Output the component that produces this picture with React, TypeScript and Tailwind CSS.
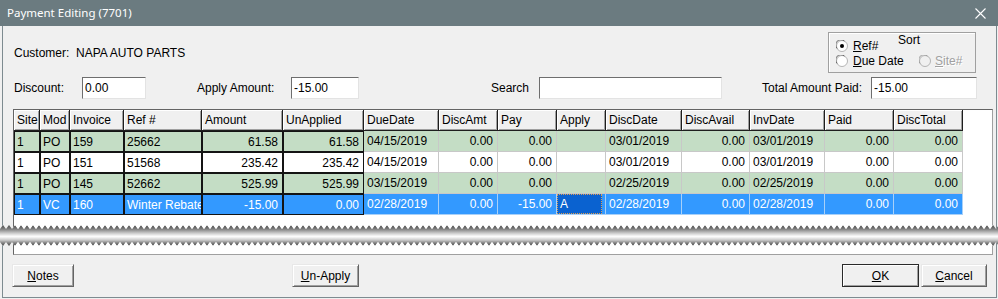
import React from "react";

type Col = { h: string; w: number; fixed: boolean; right: boolean };

const cols: Col[] = [
  { h: "Site", w: 26, fixed: true, right: false },
  { h: "Mod", w: 30, fixed: true, right: false },
  { h: "Invoice", w: 54, fixed: true, right: false },
  { h: "Ref #", w: 78, fixed: true, right: false },
  { h: "Amount", w: 81, fixed: true, right: true },
  { h: "UnApplied", w: 81, fixed: true, right: true },
  { h: "DueDate", w: 75, fixed: false, right: false },
  { h: "DiscAmt", w: 59, fixed: false, right: true },
  { h: "Pay", w: 59, fixed: false, right: true },
  { h: "Apply", w: 49, fixed: false, right: false },
  { h: "DiscDate", w: 76, fixed: false, right: false },
  { h: "DiscAvail", w: 68, fixed: false, right: true },
  { h: "InvDate", w: 75, fixed: false, right: false },
  { h: "Paid", w: 69, fixed: false, right: true },
  { h: "DiscTotal", w: 69, fixed: false, right: true },
];

type Row = { kind: "green" | "white" | "sel"; cells: string[] };

const rows: Row[] = [
  {
    kind: "green",
    cells: ["1", "PO", "159", "25662", "61.58", "61.58", "04/15/2019", "0.00", "0.00", "", "03/01/2019", "0.00", "03/01/2019", "0.00", "0.00"],
  },
  {
    kind: "white",
    cells: ["1", "PO", "151", "51568", "235.42", "235.42", "04/15/2019", "0.00", "0.00", "", "03/01/2019", "0.00", "03/01/2019", "0.00", "0.00"],
  },
  {
    kind: "green",
    cells: ["1", "PO", "145", "52662", "525.99", "525.99", "03/15/2019", "0.00", "0.00", "", "02/25/2019", "0.00", "02/25/2019", "0.00", "0.00"],
  },
  {
    kind: "sel",
    cells: ["1", "VC", "160", "Winter Rebate", "-15.00", "0.00", "02/28/2019", "0.00", "-15.00", "A", "02/28/2019", "0.00", "02/28/2019", "0.00", "0.00"],
  },
];

function Radio({ checked, disabled }: { checked?: boolean; disabled?: boolean }) {
  return (
    <svg width="12" height="12" viewBox="0 0 12 12" className="shrink-0">
      <circle cx="6" cy="6" r="5.5" fill={disabled ? "#f0f0f0" : "#ffffff"} stroke="#b4b4b4" />
      <path d="M1.2 8.5 A5 5 0 0 1 8.5 1.2" fill="none" stroke={disabled ? "#a0a0a0" : "#696969"} strokeWidth="1" />
      {checked && <circle cx="6" cy="6" r="2" fill="#000000" />}
    </svg>
  );
}

function Field({ w, value }: { w: string; value: string }) {
  return (
    <div
      className={`${w} h-[22px] bg-white border border-t-[#6e6e6e] border-l-[#6e6e6e] border-b-[#e3e3e3] border-r-[#e3e3e3] pl-[2px] flex items-center text-black`}
    >
      {value}
    </div>
  );
}

function Tear() {
  const top: string[] = ["0,0", "998,0"];
  for (let x = 999; x >= 0; x -= 3) {
    const k = Math.round(x / 3);
    top.push(`${x},${k % 2 === 0 ? 7 : 3}`);
  }
  const bot: string[] = [];
  for (let x = 0; x <= 999; x += 3) {
    const k = Math.round(x / 3);
    bot.push(`${x},${k % 2 === 0 ? 20 : 24}`);
  }
  bot.push("998,26", "0,26");
  const paper = (
    <>
      <rect x="0" y="0" width="998" height="26" fill="#f0f0f0" />
      <rect x="13" y="0" width="980" height="26" fill="#ffffff" />
      <line x1="2.5" y1="0" x2="2.5" y2="26" stroke="#7d8b90" />
      <line x1="13.5" y1="0" x2="13.5" y2="26" stroke="#646464" />
      <line x1="992.5" y1="0" x2="992.5" y2="26" stroke="#a0a0a0" />
      <line x1="996.5" y1="0" x2="996.5" y2="26" stroke="#7d8b90" />
    </>
  );
  return (
    <svg width="998" height="26" viewBox="0 0 998 26" className="block">
      <defs>
        <linearGradient id="sh1" x1="0" y1="0" x2="0" y2="1">
          <stop offset="0" stopColor="#3c3c3c" />
          <stop offset="0.4" stopColor="#7a7a7a" />
          <stop offset="0.75" stopColor="#c8c8c8" />
          <stop offset="1" stopColor="#f8f8f8" />
        </linearGradient>
        <linearGradient id="sh2" x1="0" y1="0" x2="0" y2="1">
          <stop offset="0" stopColor="#f8f8f8" />
          <stop offset="0.35" stopColor="#c8c8c8" />
          <stop offset="0.7" stopColor="#7a7a7a" />
          <stop offset="1" stopColor="#3c3c3c" />
        </linearGradient>
        <clipPath id="cpTop">
          <polygon points={top.join(" ")} />
        </clipPath>
        <clipPath id="cpBot">
          <polygon points={bot.join(" ")} />
        </clipPath>
      </defs>
      <rect x="0" y="0" width="998" height="26" fill="#fbfbfb" />
      <rect x="0" y="2" width="998" height="12" fill="url(#sh1)" />
      <rect x="0" y="15" width="998" height="9" fill="url(#sh2)" />
      <g clipPath="url(#cpTop)">{paper}</g>
      <g clipPath="url(#cpBot)">{paper}</g>
    </svg>
  );
}

function Btn({ w, children, def }: { w: string; children: React.ReactNode; def?: boolean }) {
  return (
    <div
      className={`${w} h-[23px] flex items-center justify-center bg-[#f0f0f0] border ${
        def ? "border-[#2a2a2a]" : "border-t-[#e8e8e8] border-l-[#e8e8e8] border-b-[#646464] border-r-[#646464]"
      } shadow-[inset_1px_1px_0_#ffffff,inset_-1px_-1px_0_#a0a0a0] text-black`}
    >
      {children}
    </div>
  );
}

export default function App() {
  return (
    <div
      className="w-[998px] h-[299px] bg-[#f0f0f0] overflow-hidden text-[12px] leading-[14px] text-black"
      style={{ fontFamily: '"Liberation Sans", Arial, sans-serif' }}
    >
      {/* Title bar */}
      <div className="h-[26px] bg-[#6b7b80] flex items-center justify-between pl-[7px] pr-[12px]">
        <span className="text-white text-[11.5px]" style={{ fontFamily: '"Noto Sans", sans-serif' }}>
          Payment Editing (7701)
        </span>
        <svg width="11" height="11" viewBox="0 0 11 11">
          <path d="M0.5 0.5 L10.5 10.5 M10.5 0.5 L0.5 10.5" stroke="#ffffff" strokeWidth="1.1" fill="none" />
        </svg>
      </div>

      {/* Top body */}
      <div className="ml-[2px] mr-[1px] h-[196px] border-x border-[#7d8b90] flex flex-col">
        {/* Row 1 */}
        <div className="h-[51px] flex items-start pl-[11px]">
          <div className="mt-[20px] whitespace-pre">Customer:  NAPA AUTO PARTS</div>
          <div className="flex-1" />
          <div className="relative mt-[6px] mr-[20px] w-[148px] h-[41px] border border-[#a0a0a0] shadow-[inset_1px_1px_0_#ffffff] pt-[5px] pl-[7px]">
            <span className="absolute left-[69px] top-0">Sort</span>
            <div className="h-[15px] flex items-center gap-[5px]">
              <Radio checked />
              <span>
                <span className="underline">R</span>ef#
              </span>
            </div>
            <div className="h-[15px] flex items-center">
              <Radio />
              <span className="ml-[5px] w-[66px]">
                <span className="underline">D</span>ue Date
              </span>
              <Radio disabled />
              <span className="ml-[4px] text-[#a0a0a0] [text-shadow:1px_1px_0_#ffffff]">
                <span className="underline">S</span>ite#
              </span>
            </div>
          </div>
        </div>

        {/* Row 2 */}
        <div className="h-[22px] flex items-center pl-[11px]">
          <div className="w-[68px]">Discount:</div>
          <Field w="w-[64px]" value="0.00" />
          <div className="w-[51px]" />
          <div className="w-[94px]">Apply Amount:</div>
          <Field w="w-[68px]" value="-15.00" />
          <div className="w-[132px]" />
          <div className="w-[48px]">Search</div>
          <Field w="w-[183px]" value="" />
          <div className="w-[40px]" />
          <div className="w-[109px]">Total Amount Paid:</div>
          <Field w="w-[106px]" value="-15.00" />
        </div>

        {/* Grid top */}
        <div className="mt-[10px] ml-[10px] w-[980px] flex-1 bg-white border-t border-l border-r border-t-[#646464] border-l-[#646464] border-r-[#a0a0a0]">
          <div className="flex h-[21px]">
            {cols.map((c) => (
              <div
                key={c.h}
                style={{ width: c.w }}
                className="shrink-0 h-[21px] bg-[#f0f0f0] border-r border-b border-[#1e1e1e] shadow-[inset_1px_1px_0_#ffffff,inset_-1px_-1px_0_#a0a0a0] pl-[3px] flex items-center whitespace-nowrap overflow-hidden"
              >
                {c.h}
              </div>
            ))}
          </div>
          {rows.map((r, ri) => (
            <div key={ri} className="flex h-[21px]">
              {cols.map((c, ci) => {
                const sel = r.kind === "sel";
                const bg =
                  r.kind === "green" ? "bg-[#c4ddc5]" : r.kind === "white" ? "bg-white" : "bg-[#3399ff]";
                const isApplySel = sel && c.h === "Apply";
                const border = c.fixed
                  ? "border border-[#141414]"
                  : sel
                  ? "border-r border-b border-[#a8d0f8]"
                  : "border-r border-b border-[#c8c8c8]";
                return (
                  <div
                    key={ci}
                    style={{ width: c.w }}
                    className={`shrink-0 h-[21px] ${bg} ${border} ${sel ? "text-white" : "text-black"} ${
                      c.right ? "justify-end pr-[4px]" : c.fixed ? "pl-[2px]" : "pl-[3px]"
                    } flex items-center whitespace-nowrap overflow-hidden`}
                  >
                    {isApplySel ? (
                      <div className="w-full h-full -ml-[3px] bg-[#0a62d0] border border-dotted border-[#e0a050] pl-[2px] flex items-center">
                        A
                      </div>
                    ) : (
                      r.cells[ci]
                    )}
                  </div>
                );
              })}
            </div>
          ))}
        </div>
      </div>

      <Tear />

      {/* Bottom body */}
      <div className="ml-[2px] mr-[1px] h-[50px] border-x border-b border-[#7d8b90] flex flex-col">
        <div className="ml-[10px] w-[980px] h-[7px] bg-white border-l border-r border-b border-l-[#646464] border-r-[#a0a0a0] border-b-[#a0a0a0]" />
        <div className="mt-[9px] flex items-center pl-[9px] pr-[9px]">
          <Btn w="w-[62px]">
            <span className="underline">N</span>otes
          </Btn>
          <div className="w-[218px]" />
          <Btn w="w-[67px]">
            <span className="underline">U</span>n-Apply
          </Btn>
          <div className="flex-1" />
          <Btn w="w-[77px]" def>
            <span className="underline">O</span>K
          </Btn>
          <div className="w-[2px]" />
          <Btn w="w-[66px]">
            <span className="underline">C</span>ancel
          </Btn>
        </div>
      </div>
    </div>
  );
}
